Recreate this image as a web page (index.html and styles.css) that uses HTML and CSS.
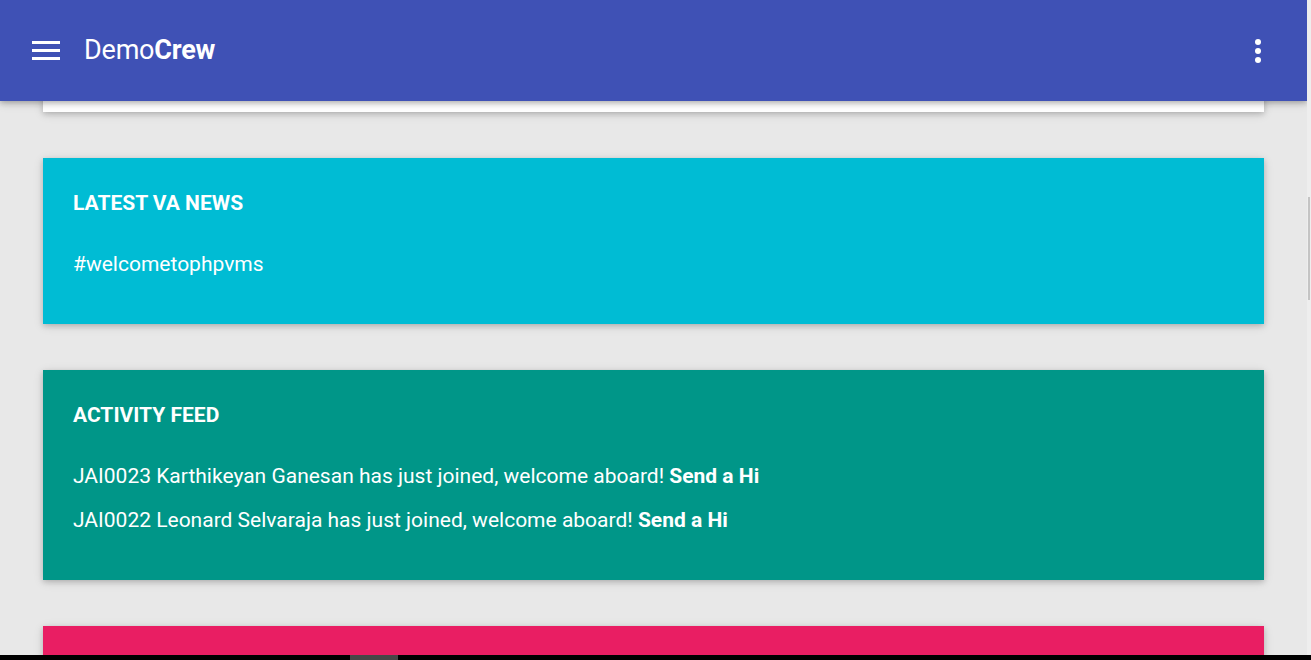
FILE: index.html
```html
<!DOCTYPE html>
<html lang="en">
<head>
<meta charset="utf-8">
<title>DemoCrew</title>
<link rel="stylesheet" href="styles.css">
</head>
<body>
<div class="frame">
  <div class="app">
    <header class="appbar">
      <div class="appbar-left">
        <svg class="menu-icon" width="28" height="22" viewBox="0 0 28 22" aria-hidden="true">
          <rect x="0" y="2" width="28" height="3" fill="#fff"/>
          <rect x="0" y="10" width="28" height="3" fill="#fff"/>
          <rect x="0" y="18" width="28" height="3" fill="#fff"/>
        </svg>
        <div class="brand">Demo<b>Crew</b></div>
      </div>
      <svg class="more-icon" width="8" height="26" viewBox="0 0 8 26" aria-hidden="true">
        <circle cx="4" cy="4" r="3" fill="#fff"/>
        <circle cx="4" cy="13" r="3" fill="#fff"/>
        <circle cx="4" cy="22" r="3" fill="#fff"/>
      </svg>
    </header>
    <main class="content">
      <section class="card card-white"></section>
      <section class="card card-cyan">
        <h2 class="card-title">LATEST VA NEWS</h2>
        <p class="card-line">#welcometophpvms</p>
      </section>
      <section class="card card-teal">
        <h2 class="card-title">ACTIVITY FEED</h2>
        <p class="card-line">JAI0023 Karthikeyan Ganesan has just joined, welcome aboard! <b>Send a Hi</b></p>
        <p class="card-line">JAI0022 Leonard Selvaraja has just joined, welcome aboard! <b>Send a Hi</b></p>
      </section>
      <section class="card card-pink"></section>
    </main>
  </div>
  <div class="vscroll"><div class="vthumb"></div></div>
  <div class="hscroll"><div class="hthumb"></div></div>
</div>
</body>
</html>
```

FILE: styles.css
```css
* { box-sizing: border-box; }
html, body {
  margin: 0;
  padding: 0;
  height: 660px;
  overflow: hidden;
  background: #e8e8e8;
  font-family: Roboto, "Liberation Sans", Arial, sans-serif;
  color: #fff;
}
.frame {
  display: grid;
  grid-template-columns: 1fr 4px;
  grid-template-rows: 655px 5px;
  height: 660px;
}
.app {
  overflow: hidden;
  display: flex;
  flex-direction: column;
}
.appbar {
  position: relative;
  z-index: 2;
  flex: 0 0 101px;
  height: 101px;
  background: #3f51b5;
  display: flex;
  align-items: center;
  justify-content: space-between;
  padding: 0 45px 0 32px;
  box-shadow: 0 2px 5px rgba(0,0,0,0.22), 0 2px 10px rgba(0,0,0,0.14);
}
.appbar-left {
  display: flex;
  align-items: center;
  gap: 24px;
}
.menu-icon { display: block; margin-top: -1px; }
.brand {
  font-size: 27px;
  font-weight: 400;
  letter-spacing: -0.2px;
  margin-top: -2px;
}
.brand b { font-weight: 700; }
.more-icon { display: block; }
.content {
  padding: 0 43px;
  display: flex;
  flex-direction: column;
  gap: 46px;
}
.card {
  padding: 30px 30px 31px;
  box-shadow: 0 2px 5px rgba(0,0,0,0.16), 0 2px 10px rgba(0,0,0,0.12);
}
.card-white {
  background: #fff;
  height: 71px;
  margin-top: -60px;
}
.card-cyan { background: #00bcd4; }
.card-teal { background: #009688; }
.card-pink { background: #e91e63; height: 120px; flex-shrink: 0; }
.card-title {
  margin: 0 0 31px;
  font-size: 21px;
  line-height: 30px;
  font-weight: 700;
}
.card-line {
  margin: 0 0 14px;
  font-size: 21px;
  line-height: 30px;
  font-weight: 400;
}
.card-line b { font-weight: 700; }
.vscroll {
  background: #eeeeee;
  padding-top: 197px;
  padding-left: 1px;
}
.vthumb {
  width: 2px;
  height: 103px;
  background: #c4c4c4;
}
.hscroll {
  grid-column: 1 / span 2;
  background: #000;
  padding-left: 350px;
}
.hthumb {
  width: 48px;
  height: 5px;
  background: #474747;
}
```
